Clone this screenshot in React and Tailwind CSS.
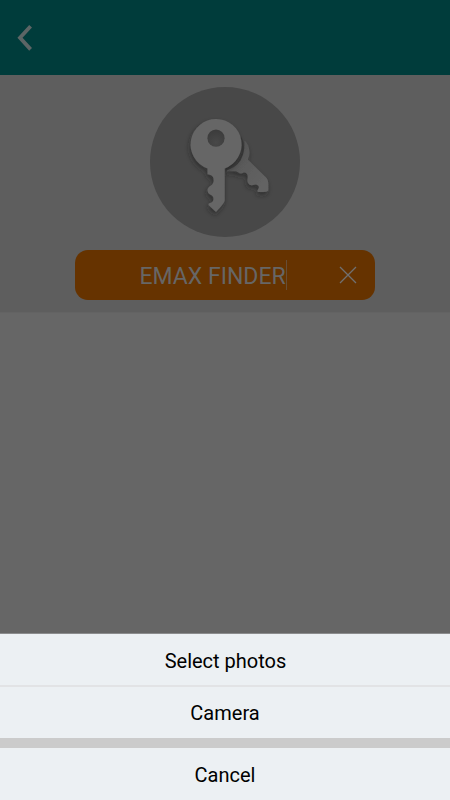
function BackIcon() {
  return (
    <svg width="16" height="28" viewBox="0 0 16 28" fill="none" stroke="#5c6565" strokeWidth="3.8" strokeLinecap="butt">
      <path d="M13.600 2.200 3 13.800l10.600 11.600" />
    </svg>
  );
}

function KeysIcon() {
  return (
    <svg width="150" height="150" viewBox="150 87 150 150">
      <defs>
        <filter id="shadow" x="-30%" y="-30%" width="160%" height="170%">
          <feDropShadow dx="-1" dy="3" stdDeviation="2.8" floodColor="#222" floodOpacity="0.55" />
        </filter>
        <linearGradient id="backKey" x1="0" y1="0" x2="1" y2="1">
          <stop offset="0.3" stopColor="#575757" />
          <stop offset="0.85" stopColor="#636363" />
        </linearGradient>
        <radialGradient id="hole" cx="0.5" cy="0.75" r="0.7">
          <stop offset="0" stopColor="#484848" />
          <stop offset="1" stopColor="#3c3c3c" />
        </radialGradient>
      </defs>
      <circle cx="225" cy="162" r="75" fill="#484848" />
      <g filter="url(#shadow)">
        <path
          fill="url(#backKey)"
          d="M244.500 140.500C248.500 144 250.300 150 249 156L247.800 159.500L266.500 178Q268.300 180 268.300 183V190.500Q267 192 263 192H258Q256.800 191 258 189.500Q259.800 187 258 185.500Q256.300 184 253 185Q249.500 185.800 248 183Q247 181 247.700 178C248.300 174.500 246.300 172.300 243.700 172.600Q240.500 174.500 238.300 172.500L236 171.300H227V169.500C237 166 246 156 244.500 140.500Z"
        />
      </g>
      <path
        d="M241 136Q247.500 148 240.500 160.500Q235 168 226 170.500V165Z"
        fill="#3a3a3a"
      />
      <g filter="url(#shadow)">
        <path
          fill="#666666"
          d="M216.300 119A25.500 25.500 0 0 1 224.700 168.500V200.500Q224.500 203 216 212L208.500 205L208.800 203.500Q213.500 202.500 213.500 199Q213.500 195.500 210 194.500Q207.500 193 207.500 190.500Q207.500 187.500 211 185.500Q214.300 183 213.500 178.500Q212.500 174.500 207.500 174.200V168.500A25.500 25.500 0 0 1 216.300 119Z"
        />
      </g>
      <circle cx="216" cy="138.200" r="8.600" fill="url(#hole)" />
    </svg>
  );
}

function SheetButton({ className, children }) {
  return (
    <button className={`flex w-full items-center justify-center bg-[#ecf0f3] text-[20px] leading-6 text-black ${className}`}>
      {children}
    </button>
  );
}

export default function App() {
  return (
    <div className="flex h-[800px] w-[450px] flex-col overflow-hidden bg-[#666666] font-['Roboto',sans-serif]">
      <header className="flex h-[75px] shrink-0 items-center bg-[#003c3b] pl-[17px]">
        <button aria-label="Back">
          <BackIcon />
        </button>
      </header>
      <section className="flex h-[238px] shrink-0 flex-col items-center border-b border-[#636363] bg-[#5e5e5e] pt-3">
        <KeysIcon />
        <div className="mt-[13px] flex h-[50px] w-[300px] items-center rounded-[13px] bg-[#663300] pl-[64.500px]">
          <span className="w-[146px] whitespace-nowrap pt-[3px] text-[23px] leading-7 text-[#666666]">EMAX FINDER</span>
          <span className="h-[30px] w-px bg-[#664e37]" />
          <svg className="ml-[52px]" width="18" height="18" viewBox="0 0 18 18" fill="none" stroke="#707070" strokeWidth="1.3">
            <path d="m1 1 16 16M17 1 1 17" />
          </svg>
        </div>
      </section>
      <div className="flex-1" />
      <div className="flex h-[167px] shrink-0 flex-col border-t border-[#8b8c8d] bg-[#cbcbcb]">
        <SheetButton className="h-[53px] border-b-2 border-[#e2e3e5] pl-px pt-[2px]">Select photos</SheetButton>
        <SheetButton className="h-[51px] pt-px">Camera</SheetButton>
        <SheetButton className="mt-[10px] h-[52px] pt-[2px]">Cancel</SheetButton>
      </div>
    </div>
  );
}
